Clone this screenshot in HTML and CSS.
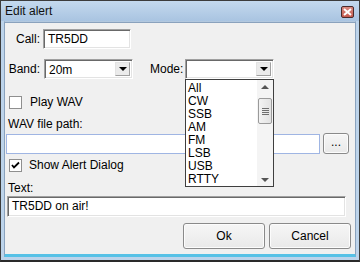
FILE: index.html
```html
<!DOCTYPE html>
<html lang="en">
<head>
  <meta charset="UTF-8">
  <title>Edit alert</title>
  <link rel="stylesheet" href="styles.css">
</head>
<body>

  <div class="window">
    <div class="titlebar">
      <span class="title">Edit alert</span>
      <span class="close">
        <svg width="9" height="8" viewBox="0 0 9 8"><path d="M1 1 L8 7 M8 1 L1 7" stroke="#fff" stroke-width="2"/></svg>
      </span>
    </div>

    <div class="client">
      <div class="row row-call">
        <label class="lbl">Call:</label>
        <div class="edit sunken call-box">TR5DD</div>
      </div>

      <div class="row row-band">
        <label class="lbl">Band:</label>
        <div class="combo sunken band-box">
          <span class="combo-text">20m</span>
          <span class="combo-btn"><i class="arrow"></i></span>
        </div>
        <label class="lbl-mode">Mode:</label>
        <div class="combo-wrap">
          <div class="combo sunken mode-box">
            <span class="combo-text"></span>
            <span class="combo-btn"><i class="arrow"></i></span>
          </div>
          <div class="droplist">
            <ul>
              <li>All</li>
              <li>CW</li>
              <li>SSB</li>
              <li>AM</li>
              <li>FM</li>
              <li>LSB</li>
              <li>USB</li>
              <li>RTTY</li>
            </ul>
            <div class="vscroll">
              <span class="sb-arrow up"></span>
              <span class="thumb"><i></i><i></i><i></i><i></i></span>
              <span class="sb-arrow down"></span>
            </div>
          </div>
        </div>
      </div>

      <div class="row row-play">
        <span class="check"></span>
        <span class="check-label">Play WAV</span>
      </div>

      <div class="caption cap-wav">WAV file path:</div>
      <div class="row row-path">
        <div class="edit path-box"></div>
        <button class="btn btn-dots">...</button>
      </div>

      <div class="row row-show">
        <span class="check checked">
          <svg width="9" height="9" viewBox="0 0 9 9"><path d="M1 4 L3 6.5 L8 1.5" fill="none" stroke="#000" stroke-width="1.8"/></svg>
        </span>
        <span class="check-label">Show Alert Dialog</span>
      </div>

      <div class="caption cap-text">Text:</div>
      <div class="edit sunken text-box">TR5DD on air!</div>

      <div class="row row-buttons">
        <button class="btn btn-ok">Ok</button>
        <button class="btn btn-cancel">Cancel</button>
      </div>
    </div>
  </div>

</body>
</html>
```

FILE: styles.css
```css
* {
  margin: 0;
  padding: 0;
  box-sizing: border-box;
}

body {
  width: 360px;
  height: 262px;
  overflow: hidden;
  font-family: 'Liberation Sans', Arial, sans-serif;
  font-size: 12px;
  line-height: 14px;
  color: #000;
  background: #fff;
}

.window {
  width: 360px;
  height: 262px;
  border: 1px solid #3c3c3c;
  border-bottom: 2px solid #2a2a2a;
  background: #bcd3ea;
  display: flex;
  flex-direction: column;
}

.titlebar {
  height: 20px;
  display: flex;
  align-items: center;
  justify-content: space-between;
  padding: 0 5px 0 4px;
  background: linear-gradient(#c4d9ee, #a9c4e1);
}

.title {
  color: #111;
}

.close {
  width: 13px;
  height: 12px;
  margin-top: 1px;
  background: linear-gradient(#d98a80, #c45a4f);
  border: 1px solid #4a2a2a;
  border-radius: 2px;
  display: flex;
  align-items: center;
  justify-content: center;
}

.client {
  flex: 1;
  margin: 0 3px 3px 3px;
  border: 1px solid #8aa2bd;
  border-top-color: #b3c8de;
  background: #f0f0f0;
  position: relative;
  border-bottom: 3px solid #56c1e6;
  box-shadow: 0 1px 0 #8aa2bd inset;
}

.row {
  display: flex;
  align-items: center;
}

.lbl {
  width: 35px;
  text-align: right;
  margin-right: 3px;
}

.sunken {
  border: 1px solid #a0a0a0;
  border-right-color: #fff;
  border-bottom-color: #fff;
  box-shadow: inset 1px 1px 0 #696969, inset -1px -1px 0 #e3e3e3;
}

.edit {
  background: #fff;
  height: 20px;
  padding: 2px 0 0 4px;
}

.row-call {
  margin-top: 7px;
}

.call-box {
  width: 88px;
}

.row-band {
  margin-top: 10px;
}

.combo {
  height: 20px;
  background: #fff;
  display: flex;
  align-items: stretch;
  justify-content: space-between;
}

.combo-text {
  padding: 3px 0 0 4px;
}

.combo-btn {
  width: 15px;
  margin: 2px 2px 2px 0;
  background: #ebebeb;
  border: 1px solid #e3e3e3;
  border-right-color: #a0a0a0;
  border-bottom-color: #a0a0a0;
  display: flex;
  align-items: center;
  justify-content: center;
}

.arrow {
  width: 0;
  height: 0;
  border-left: 4px solid transparent;
  border-right: 4px solid transparent;
  border-top: 4px solid #000;
}

.band-box {
  width: 89px;
  margin-left: 1px;
}

.lbl-mode {
  margin-left: 17px;
  width: 32px;
}

.combo-wrap {
  position: relative;
  margin-left: 3px;
}

.mode-box {
  width: 89px;
}

.droplist {
  position: absolute;
  top: 20px;
  left: 0;
  width: 89px;
  height: 108px;
  background: #fff;
  border: 1px solid #3f3f3f;
  display: flex;
  overflow: hidden;
  z-index: 5;
}

.droplist ul {
  list-style: none;
  flex: 1;
  padding-top: 1px;
}

.droplist li {
  height: 13px;
  line-height: 14px;
  padding-left: 2px;
}

.vscroll {
  width: 16px;
  background: #f4f4f4;
  display: flex;
  flex-direction: column;
  align-items: center;
  justify-content: space-between;
  padding: 5px 0 4px;
  position: relative;
}

.sb-arrow {
  width: 0;
  height: 0;
  border-left: 4px solid transparent;
  border-right: 4px solid transparent;
}

.sb-arrow.up {
  border-bottom: 4px solid #555;
}

.sb-arrow.down {
  border-top: 4px solid #555;
}

.thumb {
  position: absolute;
  top: 18px;
  left: 1px;
  width: 14px;
  height: 26px;
  border: 1px solid #9a9a9a;
  border-radius: 2px;
  background: linear-gradient(90deg, #f3f3f3, #e2e2e2);
  display: flex;
  flex-direction: column;
  align-items: center;
  justify-content: center;
  gap: 1px;
}

.thumb i {
  display: block;
  width: 7px;
  height: 1px;
  background: #6f6f6f;
}

.row-play {
  margin-top: 16px;
  padding-left: 4px;
}

.check {
  width: 13px;
  height: 13px;
  background: #fff;
  border: 1px solid #8f8f8f;
  display: flex;
  align-items: center;
  justify-content: center;
}

.check-label {
  margin-left: 7px;
}

.row-play .check-label {
  margin-left: 8px;
}

.caption {
  padding-left: 3px;
}

.cap-wav {
  margin-top: 8px;
}

.row-path {
  margin-top: 2px;
  padding-left: 1px;
}

.path-box {
  width: 314px;
  border: 1px solid #9fb5e3;
}

.btn {
  font-family: 'Liberation Sans', Arial, sans-serif;
  font-size: 12px;
  color: #000;
  background: linear-gradient(#f6f6f6, #e9e9e9);
  border: 1px solid #8a8a8a;
  border-radius: 3px;
  box-shadow: inset 0 0 0 1px #fcfcfc;
}

.btn-dots {
  width: 26px;
  height: 21px;
  margin-left: 3px;
  padding-bottom: 4px;
}

.row-show {
  margin-top: 4px;
  padding-left: 4px;
}

.cap-text {
  margin-top: 9px;
}

.text-box {
  width: 339px;
  margin: 1px 0 0 2px;
  height: 21px;
}

.row-buttons {
  margin-top: 6px;
  justify-content: flex-end;
  gap: 4px;
  padding-right: 4px;
}

.btn-ok,
.btn-cancel {
  width: 82px;
  height: 26px;
}
```
